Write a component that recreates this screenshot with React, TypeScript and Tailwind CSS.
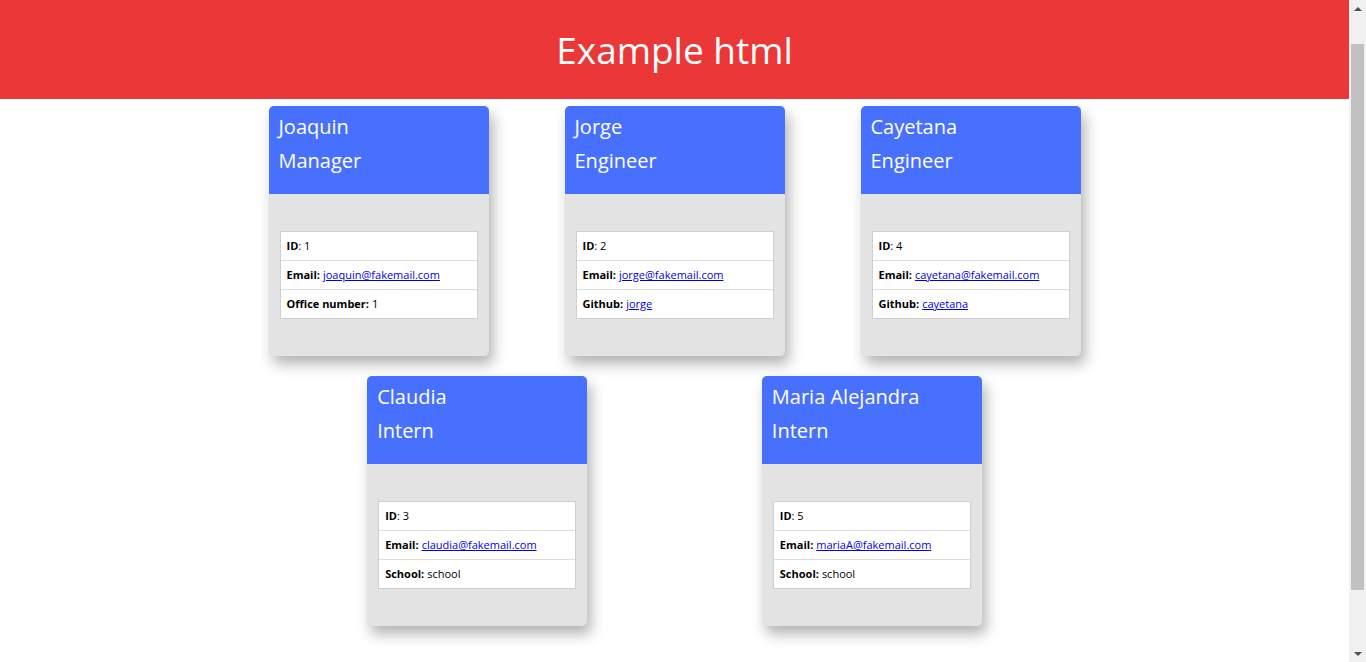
import React from 'react'

type Employee = {
  name: string
  role: string
  id: number
  email: string
  extraLabel: string
  extra: string
  extraLink?: boolean
}

const topRow: Employee[] = [
  { name: 'Joaquin', role: 'Manager', id: 1, email: 'joaquin@fakemail.com', extraLabel: 'Office number', extra: '1' },
  { name: 'Jorge', role: 'Engineer', id: 2, email: 'jorge@fakemail.com', extraLabel: 'Github', extra: 'jorge', extraLink: true },
  { name: 'Cayetana', role: 'Engineer', id: 4, email: 'cayetana@fakemail.com', extraLabel: 'Github', extra: 'cayetana', extraLink: true },
]

const bottomRow: Employee[] = [
  { name: 'Claudia', role: 'Intern', id: 3, email: 'claudia@fakemail.com', extraLabel: 'School', extra: 'school' },
  { name: 'Maria Alejandra', role: 'Intern', id: 5, email: 'mariaA@fakemail.com', extraLabel: 'School', extra: 'school' },
]

function Card({ emp }: { emp: Employee }) {
  return (
    <div className="w-[220px] h-[250px] rounded-[5px] overflow-hidden bg-[#e3e3e3] shadow-[4px_8px_14px_rgba(0,0,0,0.3)] flex flex-col">
      <div className="bg-[#4870ff] text-white h-[88px] px-[10px] pt-[4px] text-[20px] leading-[34px]">
        <div>{emp.name}</div>
        <div>{emp.role}</div>
      </div>
      <div className="flex-1 flex items-center px-[11px]">
        <ul className="w-full bg-white border border-[#cfcfcf] text-[11px] text-black">
          <li className="h-[29px] flex items-center px-[6px] border-b border-[#dedede]">
            <b>ID</b>: {emp.id}
          </li>
          <li className="h-[29px] flex items-center px-[6px] border-b border-[#dedede]">
            <b className="mr-[3px]">Email:</b>
            <a href="#" className="text-[#0000ee] underline">{emp.email}</a>
          </li>
          <li className="h-[28px] flex items-center px-[6px]">
            <b className="mr-[3px]">{emp.extraLabel}:</b>
            {emp.extraLink ? (
              <a href="#" className="text-[#0000ee] underline">{emp.extra}</a>
            ) : (
              <span>{emp.extra}</span>
            )}
          </li>
        </ul>
      </div>
    </div>
  )
}

function Scrollbar() {
  return (
    <div className="w-[17px] h-[662px] shrink-0 bg-[#f1f1f1] flex flex-col items-center">
      <div className="h-[17px] flex items-center justify-center">
        <svg width="8" height="4" viewBox="0 0 8 4"><path d="M0 4 L4 0 L8 4 Z" fill="#505050" /></svg>
      </div>
      <div className="h-[27px]" />
      <div className="w-[13px] h-[546px] bg-[#c1c1c1]" />
      <div className="flex-1" />
      <div className="h-[17px] flex items-center justify-center">
        <svg width="8" height="4" viewBox="0 0 8 4"><path d="M0 0 L8 0 L4 4 Z" fill="#505050" /></svg>
      </div>
    </div>
  )
}

export default function App() {
  return (
    <div className="flex h-[662px] overflow-hidden bg-white" style={{ fontFamily: '"Open Sans", "Noto Sans", sans-serif' }}>
      <div className="flex-1 min-w-0">
        <header className="h-[99px] bg-[#eb3737] text-white flex items-center justify-center">
          <h1 className="text-[37px] leading-none">Example html</h1>
        </header>
        <div className="w-[964px] mx-auto">
          <div className="flex justify-evenly mt-[7px]">
            {topRow.map((e) => (
              <Card key={e.id} emp={e} />
            ))}
          </div>
          <div className="flex justify-evenly mt-[20px]">
            {bottomRow.map((e) => (
              <Card key={e.id} emp={e} />
            ))}
          </div>
        </div>
      </div>
      <Scrollbar />
    </div>
  )
}
